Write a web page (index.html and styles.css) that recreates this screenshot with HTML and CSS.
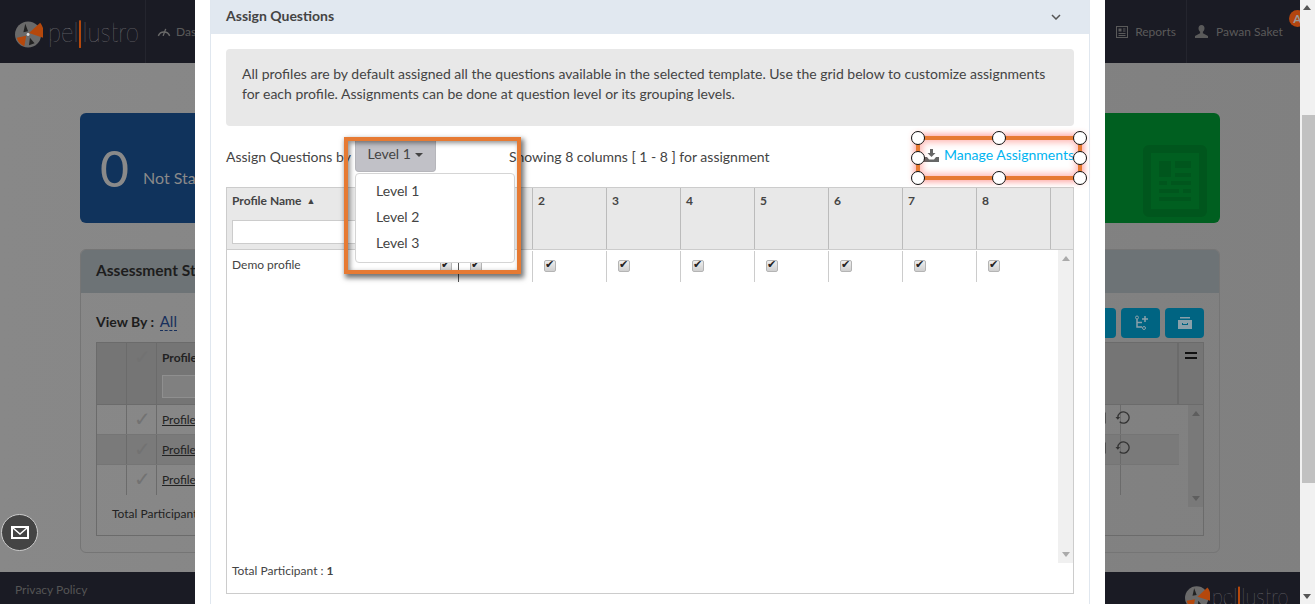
FILE: index.html
```html
<!DOCTYPE html>
<html lang="en">
<head>
<meta charset="utf-8">
<title>Assign Questions</title>
<link rel="stylesheet" href="styles.css">
</head>
<body>
<div class="viewport">
  <div class="page">
    <header class="topbar">
      <div class="brand">
        <svg class="wheel" viewBox="0 0 30 30"><circle cx="14" cy="15.500" r="14" fill="#6a6a6a"/><path d="M15 14 L27 3 A18 18 0 0 1 30 19 Z" fill="#b5480c"/><path d="M12 17 L2 19 A13 13 0 0 0 10 28 Z" fill="#b5480c"/><path d="M11 4 L14 12 L9 13 Z M16 19 L21 25 L15 27 Z" fill="#222"/><circle cx="14" cy="15.500" r="1.600" fill="#ddd"/></svg>
        <span class="word">pel<span class="word-bar"></span>lustro</span>
      </div>
      <nav class="nav-left">
        <svg class="nav-gauge" viewBox="0 0 16 12"><path d="M1.500 11 A7 7 0 0 1 14.500 11" fill="none" stroke="#6a6a6a" stroke-width="1.600"/><path d="M7 11 L10 3" stroke="#6a6a6a" stroke-width="1.600"/></svg>
        <span>Dashboard</span>
      </nav>
      <nav class="nav-right">
        <div class="nav-item">
          <svg class="nav-icon" viewBox="0 0 12 12"><rect x=".5" y=".5" width="11" height="11" fill="none" stroke="#5a5a5a"/><path d="M2.500 2.500h3v3h-3z M7 2.500h2.500v1H7z M7 4.500h2.500v1H7z M2.500 7h7v1h-7z M2.500 9h7v1h-7z" fill="#5a5a5a"/></svg>
          <span>Reports</span>
        </div>
        <div class="nav-item nav-user">
          <svg class="nav-person" viewBox="0 0 13 13"><path d="M6.500 0c2 0 3 1.400 3 3.200 0 1.800-.9 3-1.600 3.600v1.400L13 11v2H0v-2l5.100-2.800V6.800C4.400 6.200 3.500 5 3.500 3.200 3.500 1.400 4.500 0 6.500 0z" fill="#5a5a5a"/></svg>
          <span>Pawan Saket</span>
        </div>
      </nav>
    </header>

    <main class="content">
      <div class="cards">
        <section class="stat stat-blue"><span class="stat-num">0</span><span class="stat-label">Not Started</span></section>
        <section class="stat stat-green">
          <svg class="stat-icon" viewBox="0 0 64 72"><rect x="4" y="4" width="56" height="64" rx="2" fill="none" stroke="#00561d" stroke-width="8"/><path d="M16 16h12v16H16z M32 16h16v7H32z M32 28h16v4H32z M16 36h8v4h-8z M28 36h20v4H28z M16 44h20v4H16z M40 44h8v4h-8z M16 52h32v4H16z" fill="#00561d"/></svg>
        </section>
      </div>
      <section class="status">
        <h2 class="status-head">Assessment Status</h2>
        <div class="status-body">
          <div class="status-tools">
            <div class="viewby"><b>View By :</b> <a class="viewby-link">All</a></div>
            <div class="tool-btns">
              <span class="tool-btn tool-btn-cut"></span>
              <span class="tool-btn"><svg viewBox="0 0 16 16"><path d="M4 4v8h5 M4 7.500h5 M12 1v6 M9 4h6" fill="none" stroke="#8aa0aa" stroke-width="1.500"/><circle cx="4" cy="2.500" r="1.500" fill="none" stroke="#8aa0aa"/><circle cx="11" cy="13" r="1.500" fill="none" stroke="#8aa0aa"/></svg></span>
              <span class="tool-btn"><svg viewBox="0 0 16 14"><path d="M3 1h10v1.500H3z" fill="#8aa0aa"/><path d="M1 4h14v9H1z M5 7v2h6V7h-1v1H6V7z" fill="#8aa0aa" fill-rule="evenodd"/></svg></span>
            </div>
          </div>
          <div class="bg-grid">
            <div class="bg-row bg-head"><span class="bg-cell"></span><span class="bg-cell bg-check">✓</span><span class="bg-cell bg-name"><b>Profile</b><i class="bg-filter"></i></span><span class="bg-menu"><i></i></span></div>
            <div class="bg-body">
              <div class="bg-rows">
                <div class="bg-row"><span class="bg-cell"></span><span class="bg-cell bg-check">✓</span><span class="bg-cell bg-name"><u>Profile</u></span><span class="bg-actions"><svg class="bg-cal" viewBox="0 0 10 12"><path d="M1 1h8v10H1z M1 3h8" fill="none" stroke="#333" stroke-width="1.200"/></svg><svg class="bg-refresh" viewBox="0 0 16 16"><path d="M3 8a6 6 0 1 1 2 4.500" fill="none" stroke="#333" stroke-width="1.400"/><path d="M0.500 7.500h5L3 10.500z" fill="#333"/></svg></span></div>
                <div class="bg-row bg-alt"><span class="bg-cell"></span><span class="bg-cell bg-check">✓</span><span class="bg-cell bg-name"><u>Profile</u></span><span class="bg-actions"><svg class="bg-cal" viewBox="0 0 10 12"><path d="M1 1h8v10H1z M1 3h8" fill="none" stroke="#333" stroke-width="1.200"/></svg><svg class="bg-refresh" viewBox="0 0 16 16"><path d="M3 8a6 6 0 1 1 2 4.500" fill="none" stroke="#333" stroke-width="1.400"/><path d="M0.500 7.500h5L3 10.500z" fill="#333"/></svg></span></div>
                <div class="bg-row bg-last"><span class="bg-cell"></span><span class="bg-cell bg-check">✓</span><span class="bg-cell bg-name"><u>Profile</u></span><span class="bg-actions bg-actions-solo"><svg class="bg-refresh" viewBox="0 0 16 16"><path d="M3 8a6 6 0 1 1 2 4.500" fill="none" stroke="#333" stroke-width="1.400"/><path d="M0.500 7.500h5L3 10.500z" fill="#333"/></svg></span></div>
              </div>
              <div class="bg-scroll"><i class="arrow-up"></i><i class="arrow-down"></i></div>
            </div>
            <div class="bg-foot">Total Participant</div>
          </div>
        </div>
      </section>
    </main>

    <footer class="bottombar">
      <span>Privacy Policy</span>
      <div class="brand brand-small">
        <svg class="wheel" viewBox="0 0 30 30"><circle cx="14" cy="15.500" r="14" fill="#6a6a6a"/><path d="M15 14 L27 3 A18 18 0 0 1 30 19 Z" fill="#b5480c"/><path d="M12 17 L2 19 A13 13 0 0 0 10 28 Z" fill="#b5480c"/><path d="M11 4 L14 12 L9 13 Z M16 19 L21 25 L15 27 Z" fill="#222"/></svg>
        <span class="word">pel<span class="word-bar"></span>lustro</span>
      </div>
    </footer>
  </div>

  <span class="badge">A</span>
  <button class="mail" aria-label="Messages"><svg viewBox="0 0 18 13"><rect width="18" height="13" fill="#fff"/><path d="M2 2h14v9H2z" fill="#444"/><path d="M2 2l7 6 7-6" fill="none" stroke="#fff" stroke-width="1.500"/></svg></button>

  <div class="modal">
    <section class="panel">
      <header class="panel-head">
        <h3>Assign Questions</h3>
        <svg class="chevron" viewBox="0 0 10 6"><path d="M1 1l4 4 4-4" fill="none" stroke="#555" stroke-width="1.500"/></svg>
      </header>
      <div class="panel-body">
        <p class="info">All profiles are by default assigned all the questions available in the selected template. Use the grid below to customize assignments for each profile. Assignments can be done at question level or its grouping levels.</p>
        <div class="controls">
          <span class="controls-label">Assign Questions by</span>
          <div class="level">
            <button class="level-btn">Level 1 <i class="caret"></i></button>
            <ul class="level-menu">
              <li>Level 1</li>
              <li>Level 2</li>
              <li>Level 3</li>
            </ul>
          </div>
          <span class="showing">Showing 8 columns [ 1 - 8 ] for assignment</span>
          <a class="manage">
            <svg class="manage-icon" viewBox="0 0 15 13"><path d="M6 0h3v4h2.500L7.500 8 3.500 4H6z" fill="#666"/><path d="M0 8h3l2 2.500h5L12 8h3v5H0z" fill="#666"/></svg>
            Manage Assignments
            <span class="select-box">
              <i class="handle h-tl"></i><i class="handle h-tc"></i><i class="handle h-tr"></i>
              <i class="handle h-ml"></i><i class="handle h-mr"></i>
              <i class="handle h-bl"></i><i class="handle h-bc"></i><i class="handle h-br"></i>
            </span>
          </a>
        </div>
        <div class="grid">
          <div class="grid-head">
            <div class="col col-name">
              <div class="col-title">Profile Name <span class="sort">▲</span></div>
              <input class="filter" type="text" aria-label="Filter">
            </div>
            <div class="col">1</div>
            <div class="col">2</div>
            <div class="col">3</div>
            <div class="col">4</div>
            <div class="col">5</div>
            <div class="col">6</div>
            <div class="col">7</div>
            <div class="col">8</div>
            <div class="col col-end"></div>
          </div>
          <div class="grid-main">
            <div class="grid-rows">
              <div class="row">
                <div class="cell cell-name"><span>Demo profile</span><input class="check" type="checkbox" checked></div>
                <div class="cell"><input class="check" type="checkbox" checked></div>
                <div class="cell"><input class="check" type="checkbox" checked></div>
                <div class="cell"><input class="check" type="checkbox" checked></div>
                <div class="cell"><input class="check" type="checkbox" checked></div>
                <div class="cell"><input class="check" type="checkbox" checked></div>
                <div class="cell"><input class="check" type="checkbox" checked></div>
                <div class="cell"><input class="check" type="checkbox" checked></div>
                <div class="cell cell-last"><input class="check" type="checkbox" checked></div>
              </div>
            </div>
            <div class="grid-scroll"><i class="arrow-up"></i><i class="arrow-down"></i></div>
          </div>
          <div class="grid-foot">Total Participant : <b>1</b></div>
        </div>
      </div>
    </section>
    <div class="callout"></div>
  </div>

  <div class="page-scroll">
    <i class="arrow-up"></i>
    <span class="page-thumb"></span>
    <i class="arrow-down"></i>
  </div>
</div>
</body>
</html>
```
FILE: styles.css
```css
* { box-sizing: border-box; }
html, body { margin: 0; height: 100%; overflow: hidden; }
body { font-family: Lato, "Open Sans", sans-serif; color: #444; background: #808080; }

.viewport { position: relative; width: 1315px; height: 604px; overflow: hidden; }
.page { width: 1315px; height: 604px; display: flex; flex-direction: column; background: linear-gradient(90deg, #888 0, #808080 100%); }

/* top bar */
.topbar { height: 63px; flex: none; background: #1a1b24; display: flex; align-items: stretch; color: #5a5a5a; font-size: 12px; }
.brand { display: flex; align-items: center; gap: 5px; padding-left: 15px; width: 146px; border-right: 1px solid #24252e; flex: none; }
.wheel { width: 28px; height: 28px; flex: none; margin-top: 4px; }
.word { display: inline-block; font-weight: 100; font-size: 24px; color: #9a9a9a; line-height: 1; transform: scaleY(1.15); white-space: nowrap; margin-top: 2px; }
.word-bar { display: inline-block; width: 2px; height: 24px; margin: 0 1px; background: #b5480c; vertical-align: -5px; }
.nav-left { display: flex; align-items: center; gap: 5px; padding-left: 11px; font-size: 12px; }
.nav-gauge { width: 14px; height: 11px; }
.nav-right { margin-left: auto; display: flex; align-items: stretch; }
.nav-item { display: flex; align-items: center; gap: 7px; padding: 0 10px 0 0; white-space: nowrap; }
.nav-icon { width: 12px; height: 12px; }
.nav-user { border-left: 1px solid #24252e; padding-left: 8px; width: 129px; gap: 8px; }
.nav-person { width: 13px; height: 13px; margin-left: 0; }

/* dimmed page content */
.content { flex: 1; padding: 50px 95px 0 80px; min-height: 0; }
.cards { display: flex; justify-content: space-between; height: 110px; }
.stat { width: 300px; border-radius: 6px; display: flex; align-items: center; }
.stat-blue { background: #10335c; padding: 0 0 0 20px; color: #8a8a8a; }
.stat-num { font-size: 50px; line-height: 1; font-weight: 400; }
.stat-label { font-size: 16px; margin: 18px 0 0 14px; }
.stat-green { background: #005f20; justify-content: flex-end; padding-right: 13px; }
.stat-icon { width: 64px; height: 72px; margin-top: 26px; }
.status { margin-top: 26px; height: 304px; border: 1px solid #757575; border-radius: 6px; }
.status-head { margin: 0; height: 43px; background: #6d7376; padding: 0 15px; font-size: 15.500px; line-height: 41px; color: #1d1d1d; border-radius: 5px 5px 0 0; }
.status-body { padding: 15px 15px 0; }
.status-tools { display: flex; justify-content: space-between; height: 34px; font-size: 14px; color: #1d1d1d; }
.viewby { padding-top: 3px; line-height: 20px; }
.viewby-link { color: #18305c; border-bottom: 1px dashed #18305c; font-size: 15px; margin-left: 2px; }
.tool-btns { display: flex; gap: 5px; }
.tool-btn { width: 39px; height: 30px; background: #006482; border-radius: 4px; display: flex; align-items: center; justify-content: center; }
.tool-btn svg { width: 16px; height: 16px; }
.bg-grid { height: 194px; border: 1px solid #6b6b6b; font-size: 12px; color: #222; }
.bg-row { display: grid; grid-template-columns: 30px 30px 1fr 58px; height: 30px; border-bottom: 1px solid #757575; }
.bg-head { height: 62px; background: #757575; border-bottom-color: #6b6b6b; grid-template-columns: 30px 30px 1fr 25px; }
.bg-alt { background: #7a7a7a; }
.bg-last { border-bottom: 0; }
.bg-cell { border-right: 1px solid #6b6b6b; padding: 7px 5px; }
.bg-check { color: #727272; font-size: 20px; line-height: 22px; padding: 2px 0 0 7px; }
.bg-name { display: flex; flex-direction: column; gap: 12px; }
.bg-head .bg-name { gap: 10px; }
.bg-filter { width: 60px; height: 23px; border: 1px solid #8f8f8f; background: #808080; }
.bg-menu { border-left: 1px solid #6b6b6b; padding: 9px 6px 0; }
.bg-menu i { display: block; height: 7px; border-top: 2px solid #111; border-bottom: 2px solid #111; position: relative; }
.bg-body { display: flex; height: 102px; }
.bg-rows { flex: 1; }
.bg-actions { display: flex; align-items: flex-start; gap: 9px; padding: 5px 0 0 7px; margin-left: -32px; }
.bg-actions-solo { padding-left: 0; margin-left: -40px; }
.bg-cal { width: 10px; height: 12px; margin-top: 2px; }
.bg-refresh { width: 15px; height: 15px; }
.bg-scroll { width: 15px; margin-left: 9px; background: #797979; display: flex; flex-direction: column; justify-content: space-between; align-items: center; padding: 6px 0; }
.bg-scroll .arrow-up { border-bottom-color: #5e5e5e; }
.bg-scroll .arrow-down { border-top-color: #5e5e5e; }
.bg-foot { padding: 0 15px; font-size: 12px; margin-top: -1px; line-height: 16px; }

/* bottom bar */
.bottombar { height: 32px; flex: none; background: #1a1b24; color: #555; font-size: 12px; display: flex; align-items: flex-start; justify-content: space-between; padding: 10px 30px 0 15px; overflow: hidden; }
.brand-small { border: 0; width: 100px; padding: 2px 0 0 0; overflow: visible; gap: 2px; align-items: flex-start; }
.brand-small .wheel { width: 25px; height: 25px; margin-top: 1px; }
.brand-small .word { font-size: 20px; }
.brand-small .word-bar { height: 20px; vertical-align: -4px; }

.badge { position: absolute; left: 1289px; top: 10px; width: 17px; height: 17px; border-radius: 50%; background: #b3450f; color: #999; font-size: 12px; font-weight: 700; line-height: 17px; text-align: center; }
.mail { position: absolute; left: 1px; top: 514px; width: 37px; height: 37px; border-radius: 50%; background: #444; border: 1px solid #ccc; padding: 0; display: flex; align-items: center; justify-content: center; }
.mail svg { width: 18px; height: 13px; }

/* modal */
.modal { position: absolute; left: 195px; top: 0; width: 910px; height: 604px; background: #fff; padding: 0 15px; }
.panel { border: 1px solid #e0e7ef; border-top: 0; border-bottom: 0; height: 604px; }
.panel-head { height: 34px; background: #e1e8f0; display: flex; align-items: center; justify-content: space-between; padding: 0 28px 4px 15px; }
.panel-head h3 { margin: 0; font-size: 14px; font-weight: 700; color: #444; }
.chevron { width: 10px; height: 6px; margin-top: 3px; }
.panel-body { padding: 15px 15px 0; }
.info { margin: 0; height: 77px; background: #e8e8e8; border-radius: 4px; padding: 15px 16px; font-size: 14px; line-height: 20px; }
.controls { height: 61px; display: flex; font-size: 14px; color: #444; position: relative; }
.controls-label { margin-top: 22px; line-height: 18px; width: 129px; flex: none; white-space: nowrap; }
.level { position: relative; width: 154px; flex: none; margin-top: 14px; }
.level-btn { width: 81px; height: 32px; font: inherit; color: #444; background: #c1c1c7; border: 1px solid #b6b6bb; border-top: 0; border-radius: 0 0 4px 4px; padding: 0 0 4px; }
.caret { display: inline-block; width: 0; height: 0; border: 4px solid transparent; border-top-color: #444; border-bottom: 0; vertical-align: middle; margin-left: 1px; }
.level-menu { position: absolute; z-index: 3; left: 0; top: 33px; width: 160px; height: 90px; margin: 0; padding: 4px 0; list-style: none; background: #fff; border: 1px solid #d5d5d5; border-radius: 4px; }
.level-menu li { height: 26px; line-height: 26px; padding-left: 20px; }
.showing { margin-top: 22px; line-height: 18px; white-space: nowrap; }
.manage { margin-left: auto; margin-top: 20px; height: 18px; line-height: 18px; color: #00b4f0; display: flex; align-items: center; gap: 5px; position: relative; white-space: nowrap; }
.manage-icon { width: 15px; height: 13px; margin-top: 1px; }
.select-box { position: absolute; left: -8px; right: -8px; top: -10px; bottom: -16px; border: 4px solid #e67a33; box-shadow: 0 0 6px 2px rgba(255, 60, 50, .45), inset 0 0 7px 2px rgba(255, 60, 50, .4); }
.handle { position: absolute; width: 14px; height: 14px; border-radius: 50%; background: #fff; border: 1.500px solid #111; }
.h-tl, .h-tc, .h-tr { top: -9px; }
.h-ml, .h-mr { top: 11px; }
.h-bl, .h-bc, .h-br { bottom: -9px; }
.h-tl, .h-ml, .h-bl { left: -9px; }
.h-tc, .h-bc { left: 72px; }
.h-tr, .h-mr, .h-br { right: -9px; }

.grid { height: 407px; border: 1px solid #ccc; display: flex; flex-direction: column; }
.grid-head { height: 62px; flex: none; display: grid; grid-template-columns: 232px repeat(8, 74px) 1fr; background: #e8e8e8; border-bottom: 1px solid #ccc; font-size: 12px; font-weight: 700; }
.col { border-right: 1px solid #bbb; padding: 5px 5px; line-height: 15px; }
.col-end { border-right: 0; }
.col-title { height: 21px; white-space: nowrap; }
.sort { font-size: 9px; margin-left: 2px; vertical-align: 1px; }
.filter { display: block; width: 220px; height: 24px; margin-top: 6px; background: #fff; border: 1px solid #ccc; padding: 0; }
.grid-main { flex: 1; min-height: 0; display: flex; }
.grid-rows { flex: 1; }
.row { display: grid; grid-template-columns: 232px repeat(8, 74px); height: 32px; font-size: 12px; }
.cell { border-right: 1px solid #ccc; margin-top: 1px; padding: 9px 0 0 11px; }
.cell-name { border-right: 1px solid #555; display: flex; justify-content: space-between; padding: 6px 6px 0 5px; }
.cell-last { border-right: 0; }
.cell-name .check { margin-top: 3px; }
.check { appearance: none; display: block; width: 12px; height: 12px; margin: 0; border: 1px solid #b4b4b4; border-radius: 2px; background: linear-gradient(#eee, #cfcfcf); position: relative; }
.check::after { content: "✔"; position: absolute; left: 0; top: -2px; font: 11px/12px "DejaVu Sans", sans-serif; color: #222; }
.grid-scroll { width: 15px; flex: none; background: #f0f0f0; display: flex; flex-direction: column; justify-content: space-between; align-items: center; padding: 6px 0; }
.arrow-up { width: 0; height: 0; border: 4px solid transparent; border-bottom: 5px solid #aaa; border-top: 0; }
.arrow-down { width: 0; height: 0; border: 4px solid transparent; border-top: 5px solid #aaa; border-bottom: 0; }
.grid-foot { height: 30px; flex: none; padding: 0 5px; font-size: 12px; line-height: 16px; }

.callout { position: absolute; z-index: 4; left: 149px; top: 137px; width: 177px; height: 137px; border: 4px solid #e67a33; box-shadow: 2px 3px 5px 1px rgba(0, 0, 0, .55), inset 2px 2px 5px rgba(0, 0, 0, .45); pointer-events: none; }

/* page scrollbar */
.page-scroll { position: absolute; left: 1300px; top: 0; width: 15px; height: 604px; background: #f1f1f1; }
.page-scroll .arrow-up { position: absolute; left: 3px; top: 5px; border-bottom-color: #555; }
.page-scroll .arrow-down { position: absolute; left: 3px; bottom: 5px; border-top-color: #555; }
.page-thumb { position: absolute; left: 2px; right: 0; top: 115px; height: 368px; background: #c1c1c1; }
```
